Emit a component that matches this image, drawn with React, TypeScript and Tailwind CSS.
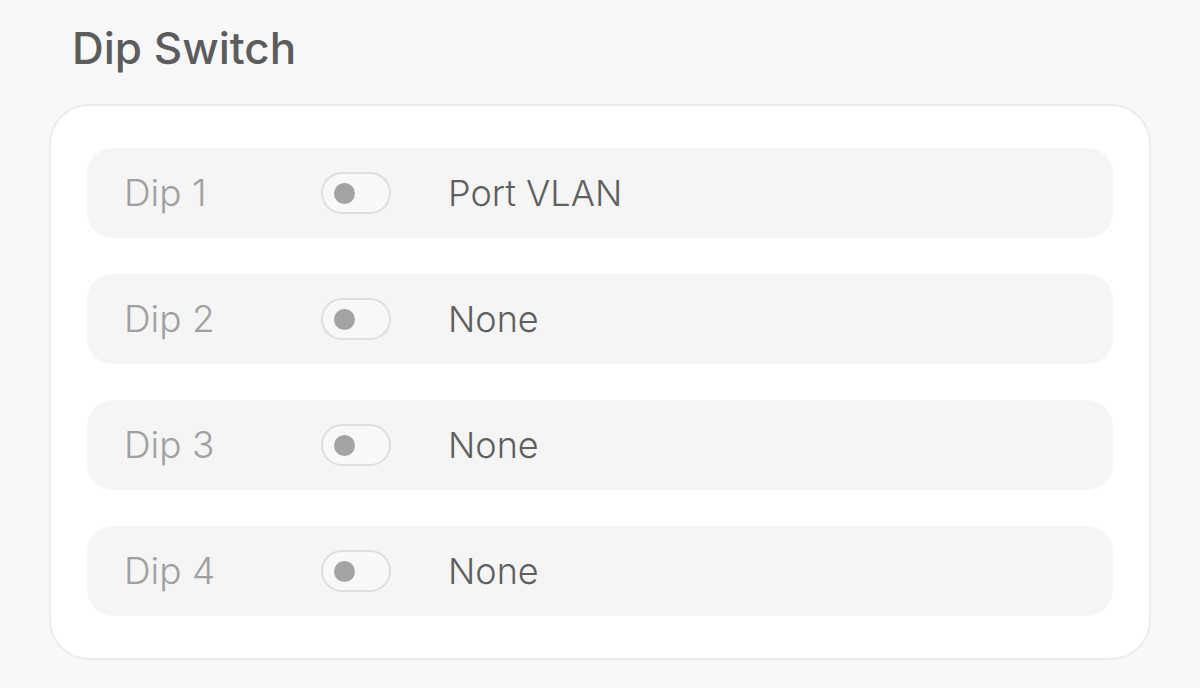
import React from 'react';

const dips = [
  { name: 'Dip 1', mode: 'Port VLAN' },
  { name: 'Dip 2', mode: 'None' },
  { name: 'Dip 3', mode: 'None' },
  { name: 'Dip 4', mode: 'None' },
];

const Toggle: React.FC = () => (
  <div className="w-[70px] h-[42px] rounded-full border-2 border-[#dedede] bg-[#f8f8f8] flex items-center pl-[11px]">
    <div className="w-[21px] h-[21px] rounded-full bg-[#a3a3a3]" />
  </div>
);

const App: React.FC = () => {
  return (
    <div className="w-[1200px] h-[688px] bg-[#f8f8fa] font-['Inter',sans-serif] px-[49px] pt-[24px]">
      <h1 className="text-[44px] leading-[48px] text-[#5c5c5c] font-medium ml-[23px] mb-[32px]">
        Dip Switch
      </h1>
      <div className="w-[1102px] bg-white border-2 border-[#ececec] rounded-[40px] px-[36px] py-[42px] flex flex-col gap-[36px]">
        {dips.map((d) => (
          <div key={d.name} className="h-[90px] rounded-[26px] bg-[#f5f5f5] flex items-center pl-[37px]">
            <span className="w-[197px] text-[37px] font-light text-[#a0a0a0]">{d.name}</span>
            <Toggle />
            <span className="ml-[57px] text-[36px] font-light text-[#5f5f5f]">{d.mode}</span>
          </div>
        ))}
      </div>
    </div>
  );
};

export default App;
